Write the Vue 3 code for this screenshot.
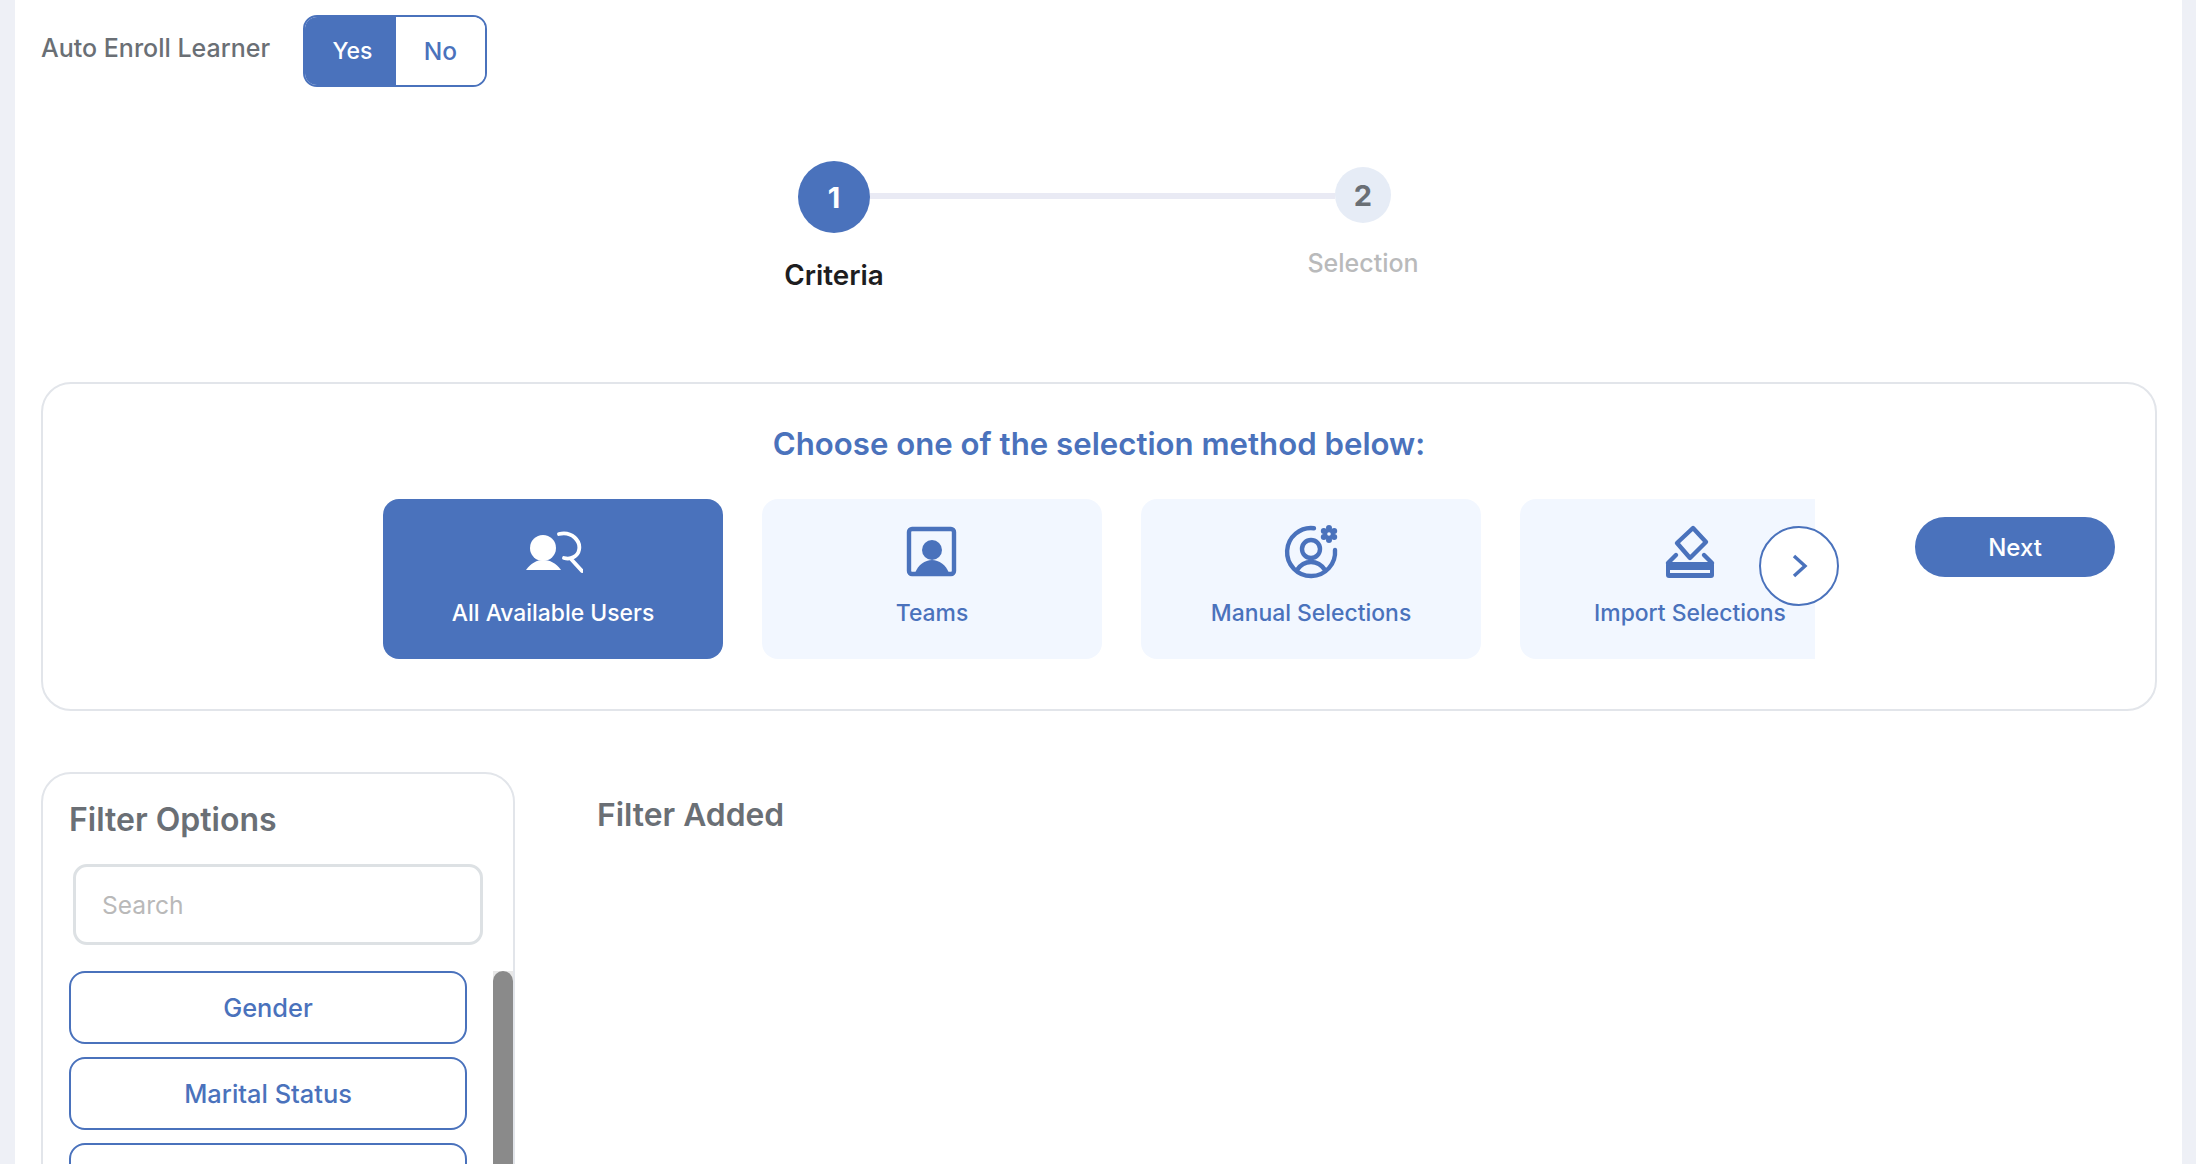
<template>
	<div class="page">
		<main class="content">
			<div class="enroll-row">
				<span class="enroll-label">Auto Enroll Learner</span>
				<div class="toggle">
					<button class="toggle-btn active">Yes</button>
					<button class="toggle-btn">No</button>
				</div>
			</div>

			<div class="stepper">
				<div class="step step-current">
					<div class="step-circle">1</div>
					<div class="step-name">Criteria</div>
				</div>
				<div class="step-line"></div>
				<div class="step step-next">
					<div class="step-circle">2</div>
					<div class="step-name">Selection</div>
				</div>
			</div>

			<section class="method-card">
				<h2 class="method-title">Choose one of the selection method below:</h2>
				<div class="method-row">
					<div class="carousel">
						<div class="carousel-view">
							<div class="tile tile-active">
								<svg class="tile-icon" viewBox="0 0 60 60" width="60" height="60">
									<circle cx="20" cy="26" r="13" fill="currentColor" />
									<path d="M3 48C8 41 14 38 20 38C27 38 33 41 38 48Z" fill="currentColor" />
									<path d="M36 12C49 9 58 19 56 28C55 34 48 38 41 36M48 37L59 49" fill="none" stroke="currentColor" stroke-width="3.8" stroke-linecap="round" />
								</svg>
								<span>All Available Users</span>
							</div>
							<div class="tile">
								<svg class="tile-icon" viewBox="0 0 60 60" width="60" height="60">
									<rect x="7" y="7" width="45" height="45" rx="3" fill="none" stroke="currentColor" stroke-width="4.4" />
									<circle cx="30" cy="28" r="10" fill="currentColor" />
									<path d="M13 51C16 43 23 38 30 38C37 38 44 43 47 51Z" fill="currentColor" />
								</svg>
								<span>Teams</span>
							</div>
							<div class="tile">
								<svg class="tile-icon" viewBox="0 0 60 60" width="60" height="60">
									<g fill="none" stroke="currentColor" stroke-width="4.4" stroke-linecap="round">
										<path d="M33 6.2A24 24 0 1 0 54 28" />
										<circle cx="30" cy="27" r="9" />
										<path d="M16 48C20 42 25 40 30 40C35 40 40 42 44 48" />
									</g>
									<g fill="currentColor">
										<circle cx="48" cy="12" r="5.5" />
										<circle cx="48" cy="6" r="3" />
										<circle cx="48" cy="18" r="3" />
										<circle cx="42.8" cy="9" r="3" />
										<circle cx="53.2" cy="9" r="3" />
										<circle cx="42.8" cy="15" r="3" />
										<circle cx="53.2" cy="15" r="3" />
									</g>
									<circle cx="48" cy="12" r="1.8" fill="#f2f7ff" />
								</svg>
								<span>Manual Selections</span>
							</div>
							<div class="tile">
								<svg class="tile-icon" viewBox="0 0 60 60" width="60" height="60">
									<path d="M33 6L46 20L30 36L17 21Z" fill="none" stroke="currentColor" stroke-width="4.4" stroke-linejoin="round" />
									<rect x="6" y="40" width="48" height="16" rx="3" fill="currentColor" />
									<rect x="10" y="48" width="40" height="3" fill="#f2f7ff" />
									<path d="M16 33L8 41M44 33L52 41" fill="none" stroke="currentColor" stroke-width="4.4" stroke-linecap="round" />
								</svg>
								<span>Import Selections</span>
							</div>
						</div>
						<button class="carousel-next" aria-label="Next methods">
							<svg viewBox="0 0 16 24" width="16" height="24">
								<path d="M2 2L13 12L2 22" fill="none" stroke="currentColor" stroke-width="3.4" />
							</svg>
						</button>
					</div>
					<button class="next-btn">Next</button>
				</div>
			</section>

			<div class="filters">
				<aside class="filter-panel">
					<h3 class="filter-title">Filter Options</h3>
					<input class="filter-search" type="text" placeholder="Search" />
					<div class="filter-list">
						<div class="filter-buttons">
							<button v-for="item in filterItems" :key="item" class="filter-btn">{{ item }}</button>
						</div>
						<div class="scroll-track"><div class="scroll-thumb"></div></div>
					</div>
				</aside>
				<h3 class="added-title">Filter Added</h3>
			</div>
		</main>
	</div>
</template>

<script setup>
// the third option is cut off by the window, its label never shows
const filterItems = ['Gender', 'Marital Status', '']
</script>

<style>
html,
body {
	margin: 0;
	overflow: hidden;
}
</style>

<style scoped>
* {
	box-sizing: border-box;
}

.page {
	height: 100vh;
	overflow: hidden;
	background: #eef0f6;
	font-family: Inter, "Noto Sans", sans-serif;
}

.content {
	height: 100%;
	margin: 0 14px 0 15px;
	padding: 0 25px 0 26px;
	background: #fff;
}

.enroll-row {
	display: flex;
	padding-top: 15px;
}

.enroll-label {
	width: 262px;
	margin-top: 18px;
	font-size: 25px;
	line-height: 30px;
	font-weight: 500;
	color: #6a6f75;
}

.toggle {
	display: flex;
	width: 184px;
	height: 72px;
	border: 2px solid #4a72bc;
	border-radius: 14px;
	overflow: hidden;
}

.toggle-btn {
	flex: 1;
	padding: 0;
	border: 0;
	background: #fff;
	color: #4a72bc;
	font: 500 24.5px Inter, sans-serif;
}

.toggle-btn.active {
	flex: 0 0 91px;
	padding-left: 4px;
	background: #4a72bc;
	color: #fff;
	font-size: 23px;
}

.stepper {
	display: flex;
	height: 221px;
	margin-top: 74px;
	margin-left: 757px;
}

.step {
	display: flex;
	flex-direction: column;
	align-items: center;
}

.step-circle {
	display: flex;
	align-items: center;
	justify-content: center;
	border-radius: 50%;
	font-weight: 700;
	flex-shrink: 0;
}

.step-name {
	white-space: nowrap;
	line-height: 30px;
}

.step-current {
	width: 72px;
}

.step-current .step-circle {
	width: 72px;
	height: 72px;
	background: #4a72bc;
	color: #fff;
	font-size: 29px;
}

.step-current .step-name {
	margin-top: 27px;
	font-size: 27.8px;
	font-weight: 600;
	color: #1d1d1f;
}

.step-line {
	width: 465px;
	height: 6px;
	margin-top: 32px;
	background: #e9eaf4;
}

.step-next {
	width: 56px;
	margin-top: 6px;
}

.step-next .step-circle {
	width: 56px;
	height: 56px;
	background: #e6ecf6;
	color: #6a6f75;
	font-size: 29px;
}

.step-next .step-name {
	margin-top: 25px;
	font-size: 25px;
	font-weight: 500;
	color: #b9babb;
}

.method-card {
	height: 329px;
	padding-top: 40px;
	border: 2px solid #e2e5ea;
	border-radius: 30px;
}

.method-title {
	margin: 0 0 35px;
	text-align: center;
	font-size: 31.2px;
	line-height: 40px;
	font-weight: 600;
	color: #4a72bc;
}

.method-row {
	display: flex;
	align-items: flex-start;
	padding-left: 340px;
}

.carousel {
	position: relative;
	width: 1432px;
}

.carousel-view {
	display: flex;
	gap: 39px;
	overflow: hidden;
}

.tile {
	display: flex;
	flex: 0 0 340px;
	flex-direction: column;
	align-items: center;
	height: 160px;
	padding-top: 23px;
	border-radius: 16px;
	background: #f2f7ff;
	color: #4a72bc;
	font-size: 22.9px;
	line-height: 30px;
	font-weight: 500;
}

.tile-active {
	background: #4a72bc;
	color: #fff;
}

.tile-icon {
	display: block;
	margin-bottom: 16px;
}

.carousel-next {
	position: absolute;
	top: 27px;
	right: -24px;
	display: flex;
	align-items: center;
	justify-content: center;
	width: 80px;
	height: 80px;
	padding: 0 0 0 2px;
	border: 2px solid #4a72bc;
	border-radius: 50%;
	background: rgba(255, 255, 255, 0.95);
	color: #4a72bc;
}

.next-btn {
	width: 200px;
	height: 60px;
	margin: 18px 0 0 100px;
	border: 0;
	border-radius: 30px;
	background: #4a72bc;
	color: #fff;
	font: 500 24px Inter, sans-serif;
}

.filters {
	display: flex;
	margin-top: 61px;
}

.filter-panel {
	width: 474px;
	height: 500px;
	padding: 26px 0 0 26px;
	border: 2px solid #e2e5ea;
	border-radius: 30px;
}

.filter-title,
.added-title {
	margin: 0;
	line-height: 40px;
	font-weight: 600;
	color: #6a6f75;
}

.filter-title {
	font-size: 32px;
}

.filter-search {
	display: block;
	width: 410px;
	height: 81px;
	margin: 24px 0 0 4px;
	padding: 0 26px;
	border: 3px solid #dde1e4;
	border-radius: 14px;
	outline: none;
	font: 400 24.6px Inter, sans-serif;
	color: #63686e;
}

.filter-search::placeholder {
	color: #b9b9b9;
	opacity: 1;
}

.filter-list {
	display: flex;
	justify-content: space-between;
	margin: 26px 0 0 0;
}

.filter-buttons {
	display: flex;
	flex-direction: column;
	gap: 13px;
	width: 398px;
}

.filter-btn {
	height: 73px;
	flex-shrink: 0;
	border: 2px solid #4a72bc;
	border-radius: 16px;
	background: #fff;
	color: #4a72bc;
	font: 500 25.4px Inter, sans-serif;
}

.scroll-track {
	width: 20px;
	height: 300px;
	background: #e8e8e8;
}

.scroll-thumb {
	height: 100%;
	border-radius: 10px 10px 0 0;
	background: #8a8a8a;
}

.added-title {
	margin: 23px 0 0 82px;
	font-size: 31.8px;
}
</style>
